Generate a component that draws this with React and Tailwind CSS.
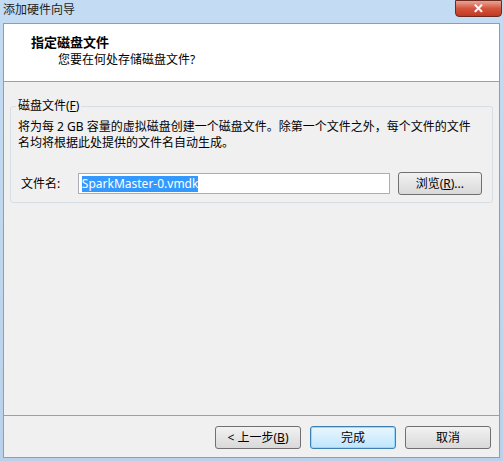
export default function App() {
  const font = { fontFamily: '"Noto Sans", "Noto Sans CJK SC", sans-serif' };
  return (
    <div
      className="w-[503px] h-[461px] flex flex-col bg-gradient-to-b from-[#c4dcf3] to-[#b9d1ea] text-[12px] text-black overflow-hidden"
      style={font}
    >
      {/* title bar */}
      <div className="h-[23px] flex items-start justify-between pl-[3px] pr-[1px]">
        <span className="text-[12px] leading-[20px] text-[#1e1e1e]">添加硬件向导</span>
        <div className="w-[47px] h-[17px] rounded-b-[4px] border border-[#6b2a22] bg-gradient-to-b from-[#e8a493] via-[#d2543c] to-[#c4371f] flex items-center justify-center">
          <span className="text-white text-[13px] font-bold leading-none">✕</span>
        </div>
      </div>

      {/* client */}
      <div className="flex-1 mx-[3px] mb-[3px] border border-[#8c9eb3] bg-[#f0f0f0] flex flex-col">
        <div className="h-[58px] bg-white border-b border-[#a0a0a0] pl-[27px] pt-[9px]">
          <div className="font-bold text-[13px] leading-[18px]">指定磁盘文件</div>
          <div className="pl-[27px] leading-[18px]">您要在何处存储磁盘文件?</div>
        </div>

        <div className="flex-1 px-[6px] pt-[24px]">
          <div className="relative border border-[#d5dfe5] rounded-[3px] h-[97px] pl-[7px] pr-[10px]">
            <div className="absolute -top-[9px] left-[5px] bg-[#f0f0f0] px-[2px] leading-[16px]">
              磁盘文件(<span className="underline">F</span>)
            </div>
            <div className="pt-[12px] leading-[16px]">
              将为每 2 GB 容量的虚拟磁盘创建一个磁盘文件。除第一个文件之外，每个文件的文件
              <br />
              名均将根据此处提供的文件名自动生成。
            </div>
            <div className="flex items-center mt-[21px] pl-[3px]">
              <span className="w-[58px]">文件名:</span>
              <div className="w-[318px] h-[21px] border border-[#abadb3] bg-white flex items-center pl-[3px]">
                <span className="bg-[#3399ff] text-white leading-[16px] text-[12px]">SparkMaster-0.vmdk</span>
              </div>
              <button className="ml-[8px] w-[86px] h-[23px] rounded-[3px] border border-[#707070] bg-gradient-to-b from-[#f2f2f2] to-[#d9d9d9]">
                浏览(<span className="underline">R</span>)...
              </button>
            </div>
          </div>
        </div>

        <div className="h-[42px] border-t border-[#a0a0a0] flex items-start justify-end pt-[10px] pr-[8px] gap-[9px]">
          <button className="w-[86px] h-[23px] rounded-[3px] border border-[#707070] bg-gradient-to-b from-[#f2f2f2] to-[#d9d9d9]">
            &lt; 上一步(<span className="underline">B</span>)
          </button>
          <button className="w-[86px] h-[23px] rounded-[3px] border border-[#3c7fb1] bg-gradient-to-b from-[#eaf6fd] to-[#bee6fd] shadow-[inset_0_0_0_1px_#8fdcff]">
            完成
          </button>
          <button className="w-[86px] h-[23px] rounded-[3px] border border-[#707070] bg-gradient-to-b from-[#f2f2f2] to-[#d9d9d9]">
            取消
          </button>
        </div>
      </div>
    </div>
  );
}
